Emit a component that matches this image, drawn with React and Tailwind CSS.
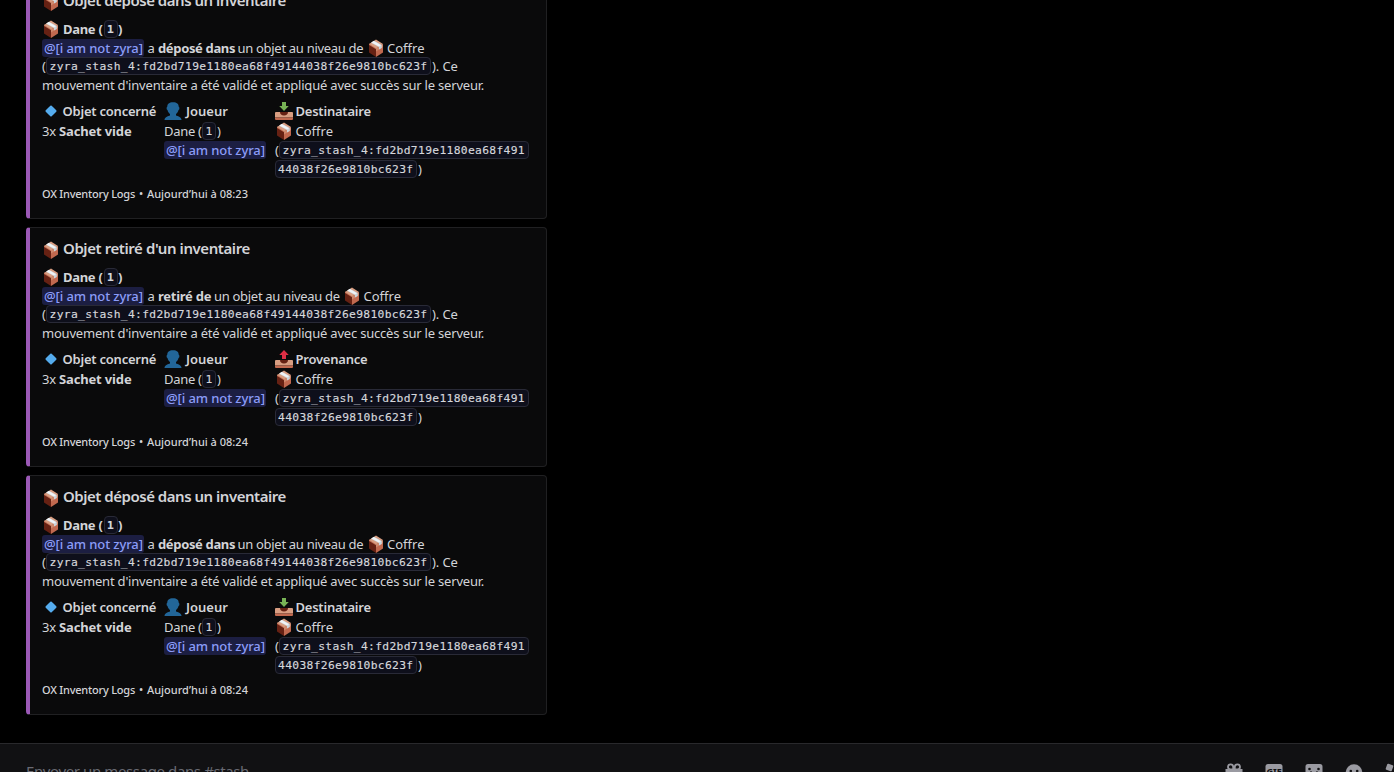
function PackageIcon({ className = '' }) {
  return (
    <svg viewBox="0 0 36 36" className={`h-[18px] w-[18px] shrink-0 ${className}`}>
      <path fill="#662113" d="M4 10v17l14 9V18z" />
      <path fill="#c1694f" d="M18 18v18l14-9V10z" />
      <path fill="#c1694f" d="M4 9v3l14 8.500V18z" />
      <path fill="#d99e82" d="M4 10 18 1l14 9-14 9z" />
      <path fill="#d99e82" opacity=".6" d="m18 19 14-9v6l-14 9z" />
      <path fill="#ccd6dd" d="m8 7.500 6-4L29.500 12v6l-5.500 3.200V16z" />
      <path fill="#f0f4f7" d="m9 7 4.500-3L28 12.500l-4 2.700z" />
    </svg>
  );
}

function UserIcon() {
  return (
    <svg viewBox="0 0 36 36" className="h-[18px] w-[18px] shrink-0">
      <path
        fill="#226699"
        d="M24 26.800v-2.700c2.500-1.700 4.300-4.800 5-8.100 1.200-.2 1.800-1.700 1.800-3.400 0-1.500-.4-2.700-1.300-3.200C29.300 4 25.800.700 18 .700S6.700 4 6.500 9.400c-.9.500-1.300 1.700-1.300 3.200 0 1.700.6 3.200 1.800 3.400.7 3.300 2.500 6.400 5 8.100v2.700C5.300 28 .900 31.200.900 36h34.200c0-4.800-4.400-8-11.100-9.200z"
      />
    </svg>
  );
}

function DiamondIcon() {
  return (
    <svg viewBox="0 0 36 36" className="h-[18px] w-[18px] shrink-0">
      <path fill="#55acee" d="M16.600 7.500a2 2 0 0 1 2.800 0l9.100 9.100a2 2 0 0 1 0 2.800l-9.100 9.100a2 2 0 0 1-2.800 0l-9.100-9.100a2 2 0 0 1 0-2.800z" />
    </svg>
  );
}

function TrayIcon({ up }) {
  return (
    <svg viewBox="0 0 36 36" className="h-[18px] w-[18px] shrink-0">
      <path fill="#d99e82" d="M1 20h34l1 2v9H0v-9z" />
      <path fill="#c1694f" d="M0 31h36v3a2 2 0 0 1-2 2H2a2 2 0 0 1-2-2z" />
      <path fill="#662113" d="M10 20h16c0 4.500-3 7-8 7s-8-2.500-8-7z" />
      {up ? (
        <path fill="#dd2e44" d="M18 0 8.500 10H14v8h8v-8h5.500z" />
      ) : (
        <path fill="#77b255" d="M14 0v8H8.500L18 18l9.500-10H22V0z" />
      )}
    </svg>
  );
}

function Run({ className = '', children }) {
  return <span className={`shrink-0 whitespace-pre ${className}`}>{children}</span>;
}

function Code({ className = '', children }) {
  return (
    <code
      className={`flex h-[18px] shrink-0 items-center whitespace-pre rounded-[4px] border border-[#292a37] bg-[#0e0f1b] font-['DejaVu_Sans_Mono',monospace] text-[11.300px] leading-none tracking-[0.33px] text-[#d6d7dc] [-webkit-text-stroke:0.15px] ${className}`}
    >
      {children}
    </code>
  );
}

function Mention() {
  return (
    <span className="flex h-[18px] w-[102px] shrink-0 items-center whitespace-pre rounded-[3px] bg-[#1c1e42] pl-[2px] font-medium tracking-[-0.1px] text-[#8b9cf8]">
      @[i am not zyra]
    </span>
  );
}

function Embed({ title, titleClass, verb, verbClass, up, place, placeClass, time }) {
  return (
    <article className="flex h-[240px] w-[521px] shrink-0 flex-col rounded-[4px] border border-l-4 border-[#202022] border-l-[#9b59b6] bg-[#0a0a0b] pl-[12px] pt-[8px]">
      <h2 className="flex h-[24px] items-center text-[15px] font-semibold">
        <PackageIcon className="mr-[3px] mt-[3px]" />
        <Run className={titleClass}>{title}</Run>
      </h2>
      <div className="mt-[7px] flex h-[19px] items-center font-bold">
        <PackageIcon className="mr-[3px]" />
        <Run className="w-[40px] tracking-[-0.3px]">Dane (</Run>
        <Code className="ml-[0.5px] w-[14px] justify-center pt-[2px]">1</Code>
        <Run className="ml-[0.5px]">)</Run>
      </div>
      <div className="flex h-[19px] items-center">
        <Mention />
        <Run className="ml-[3.500px] w-[10.500px]">a</Run>
        <Run className={verbClass}>{verb}</Run>
        <Run className="w-[129px] tracking-[-0.3px]">un objet au niveau de</Run>
        <PackageIcon className="mr-[2.5px]" />
        <Run>Coffre</Run>
      </div>
      <div className="flex h-[18px] items-center">
        <Run className="w-[4px]">(</Run>
        <Code className="w-[385px] pl-[2.500px] pt-[2px]">zyra_stash_4:fd2bd719e1180ea68f49144038f26e9810bc623f</Code>
        <Run className="ml-[1px] tracking-[-0.1px]">). Ce</Run>
      </div>
      <div className="flex h-[19px] items-center">
        <Run className="tracking-[-0.2px]">mouvement d'inventaire a été validé et appliqué avec succès sur le serveur.</Run>
      </div>
      <div className="mt-[7px] flex">
        <section className="w-[122px]">
          <h3 className="flex h-[20px] items-center font-semibold">
            <DiamondIcon />
            <Run className="ml-[2.5px] tracking-[-0.22px]">Objet concerné</Run>
          </h3>
          <p className="flex h-[20px] items-center">
            <Run className="w-[17px] tracking-[-0.1px]">3x</Run>
            <Run className="font-bold tracking-[-0.15px]">Sachet vide</Run>
          </p>
        </section>
        <section className="w-[111px]">
          <h3 className="flex h-[20px] items-center font-semibold">
            <UserIcon />
            <Run className="ml-[4px]">Joueur</Run>
          </h3>
          <p className="flex h-[20px] items-center">
            <Run className="w-[38px] tracking-[-0.3px]">Dane (</Run>
            <Code className="w-[14px] justify-center pt-[2px]">1</Code>
            <Run className="ml-[1px]">)</Run>
          </p>
          <p className="flex h-[18px] items-center">
            <Mention />
          </p>
        </section>
        <section>
          <h3 className="flex h-[20px] items-center font-semibold">
            <TrayIcon up={up} />
            <Run className={placeClass}>{place}</Run>
          </h3>
          <p className="flex h-[20px] items-center">
            <PackageIcon className="mr-[2.500px]" />
            <Run>Coffre</Run>
          </p>
          <p className="flex h-[18px] items-center">
            <Run className="w-[4px]">(</Run>
            <Code className="w-[250px] pl-[2.500px] pt-[1px]">zyra_stash_4:fd2bd719e1180ea68f491</Code>
          </p>
          <p className="mt-[1px] flex h-[18px] items-center">
            <Code className="w-[142px] pl-[2px] pt-[1px]">44038f26e9810bc623f</Code>
            <Run className="ml-[1px]">)</Run>
          </p>
        </section>
      </div>
      <footer className="mt-[8px] flex h-[16px] items-center text-[11px] font-medium">
        <Run className="w-[97px] tracking-[-0.22px]">OX Inventory Logs</Run>
        <Run className="w-[8px]">•</Run>
        <Run>{time}</Run>
      </footer>
    </article>
  );
}

const deposit = {
  title: 'Objet déposé dans un inventaire',
  titleClass: 'tracking-[-0.48px]',
  verb: 'déposé dans',
  verbClass: 'w-[79.500px] font-bold tracking-[-0.35px]',
  up: false,
  place: 'Destinataire',
  placeClass: 'ml-[2.5px] tracking-[-0.22px]',
};

const withdrawal = {
  title: "Objet retiré d'un inventaire",
  titleClass: 'tracking-[-0.42px]',
  verb: 'retiré de',
  verbClass: 'w-[56px] font-bold tracking-[-0.26px]',
  up: true,
  place: 'Provenance',
  placeClass: 'ml-[2.5px] tracking-[-0.22px]',
};

function ComposerIcons() {
  return (
    <div className="flex shrink-0 gap-[20px] text-[#9a9aa1]">
      <svg viewBox="0 0 20 20" className="h-[20px] w-[20px]" fill="currentColor">
        <path d="M1.500 7h17v3h-17zM3 11h6v8H4a1 1 0 0 1-1-1zM11 11h6v7a1 1 0 0 1-1 1h-5z" />
        <path fill="none" stroke="currentColor" strokeWidth="1.800" d="M9.200 7.500H6.300a2.600 2.600 0 1 1 2.900-2.800zM10.800 7.500h2.900a2.600 2.600 0 1 0-2.900-2.800z" />
      </svg>
      <svg viewBox="0 0 20 20" className="h-[20px] w-[20px]">
        <rect x="1.500" y="2" width="17" height="16" rx="2.500" fill="currentColor" />
        <text x="10" y="13.400" textAnchor="middle" fontSize="9" fontWeight="800" fontFamily="Noto Sans, sans-serif" fill="#111113">GIF</text>
      </svg>
      <svg viewBox="0 0 20 20" className="h-[20px] w-[20px]">
        <path fill="currentColor" d="M4 2h12a2.500 2.500 0 0 1 2.500 2.500V12h-4a2.500 2.500 0 0 0-2.500 2.500v4H4A2.500 2.500 0 0 1 1.500 16V4.500A2.500 2.500 0 0 1 4 2z" />
        <path fill="none" stroke="#111113" strokeWidth="1.300" d="M6.500 9.500c1.500 2 5.500 2 7 0" />
        <circle cx="5.500" cy="7" r="1.300" fill="#111113" />
        <circle cx="14.500" cy="7" r="1.300" fill="#111113" />
      </svg>
      <svg viewBox="0 0 20 20" className="h-[20px] w-[20px]">
        <circle cx="10" cy="10.500" r="8.300" fill="currentColor" />
        <circle cx="6.800" cy="9" r="1.300" fill="#111113" />
        <circle cx="13.200" cy="9" r="1.300" fill="#111113" />
        <path fill="#111113" d="M5.500 12h9a4.500 4.500 0 0 1-9 0z" />
      </svg>
      <svg viewBox="0 0 20 20" className="h-[20px] w-[20px]" fill="currentColor">
        <rect x="2.300" y="2.300" width="6.400" height="6.400" rx="1" transform="rotate(20 5.500 5.500)" />
        <circle cx="14.500" cy="6" r="3" />
        <circle cx="5.500" cy="14.500" r="3" />
        <rect x="11.500" y="11.500" width="6" height="6" rx="1" />
      </svg>
    </div>
  );
}

export default function App() {
  return (
    <div className="flex h-[772px] w-[1394px] flex-col overflow-hidden bg-black font-['Noto_Sans',sans-serif] text-[13px] leading-[18px] text-[#d3d4d8]">
      <main className="flex h-[743px] shrink-0 flex-col justify-end gap-[8px] overflow-hidden pb-[28px] pl-[26px]">
        <Embed {...deposit} time="Aujourd’hui à 08:23" />
        <Embed {...withdrawal} time="Aujourd’hui à 08:24" />
        <Embed {...deposit} time="Aujourd’hui à 08:24" />
      </main>
      <div className="flex h-[29px] w-[1414px] shrink-0 items-start justify-between overflow-hidden border-t border-[#29292c] bg-[#111113] pl-[26px] pr-[10px] pt-[18px]">
        <span className="-mt-[1px] whitespace-nowrap text-[15px] leading-[20px] tracking-[-0.39px] text-[#6a6b73]">Envoyer un message dans #stash</span>
        <ComposerIcons />
      </div>
    </div>
  );
}
